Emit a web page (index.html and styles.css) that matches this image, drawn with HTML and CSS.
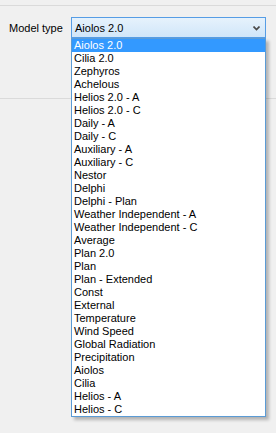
FILE: index.html
```html
<!DOCTYPE html>
<html lang="en">
<head>
  <meta charset="UTF-8" />
  <title>Model type</title>
  <link rel="stylesheet" href="styles.css">
</head>
<body>
  <div class="top-rule"></div>

  <div class="field-row">
    <label class="field-label">Model type</label>
    <div class="combo">
      <span class="combo-value">Aiolos 2.0</span>
      <svg class="combo-arrow" width="7" height="5" viewBox="0 0 7 5">
        <path d="M0.5 0.5 L3.5 3.5 L6.5 0.5" fill="none" stroke="#4a4a4a" stroke-width="1.7" />
      </svg>

      <ul class="combo-list">
        <li class="selected">Aiolos 2.0</li>
        <li>Cilia 2.0</li>
        <li>Zephyros</li>
        <li>Achelous</li>
        <li>Helios 2.0 - A</li>
        <li>Helios 2.0 - C</li>
        <li>Daily - A</li>
        <li>Daily - C</li>
        <li>Auxiliary - A</li>
        <li>Auxiliary - C</li>
        <li>Nestor</li>
        <li>Delphi</li>
        <li>Delphi - Plan</li>
        <li>Weather Independent - A</li>
        <li>Weather Independent - C</li>
        <li>Average</li>
        <li>Plan 2.0</li>
        <li>Plan</li>
        <li>Plan - Extended</li>
        <li>Const</li>
        <li>External</li>
        <li>Temperature</li>
        <li>Wind Speed</li>
        <li>Global Radiation</li>
        <li>Precipitation</li>
        <li>Aiolos</li>
        <li>Cilia</li>
        <li>Helios - A</li>
        <li>Helios - C</li>
      </ul>
    </div>
  </div>

  <div class="section-rule"></div>
</body>
</html>
```

FILE: styles.css
```css
html, body {
  height: 100%;
}

body {
  margin: 0;
  min-height: 433px;
  background-color: #f0f0f0;
  font-family: "Liberation Sans", Arial, sans-serif;
  font-size: 11px;
  color: #000;
}

.top-rule {
  height: 5px;
  border-bottom: 1px solid #dadada;
}

.field-row {
  display: flex;
  align-items: center;
  margin-top: 11px;
}

.field-label {
  width: 62px;
  padding-left: 9px;
}

.combo {
  position: relative;
  width: 185px;
  height: 19px;
  display: flex;
  align-items: center;
  justify-content: space-between;
  padding: 0 5px 0 3px;
  border: 1px solid #569de5;
  background: linear-gradient(#e6f2fc, #d0e6f9);
}

.combo-value {
  padding-top: 1px;
}

.combo-arrow {
  margin-top: 1px;
}

.combo-list {
  position: absolute;
  top: 20px;
  left: -1px;
  width: 193px;
  margin: 0;
  padding: 0;
  list-style: none;
  background: #fff;
  border: 1px solid #5b9bd5;
  box-shadow: 3px 3px 3px rgba(0,0,0,0.25);
  z-index: 10;
}

.combo-list li {
  height: 13px;
  line-height: 13px;
  padding-left: 2px;
  white-space: nowrap;
}

.combo-list li.selected {
  background-color: #3399ff;
  color: #fff;
}

.section-rule {
  margin-top: 60px;
  border-top: 1px solid #dadada;
}
```
